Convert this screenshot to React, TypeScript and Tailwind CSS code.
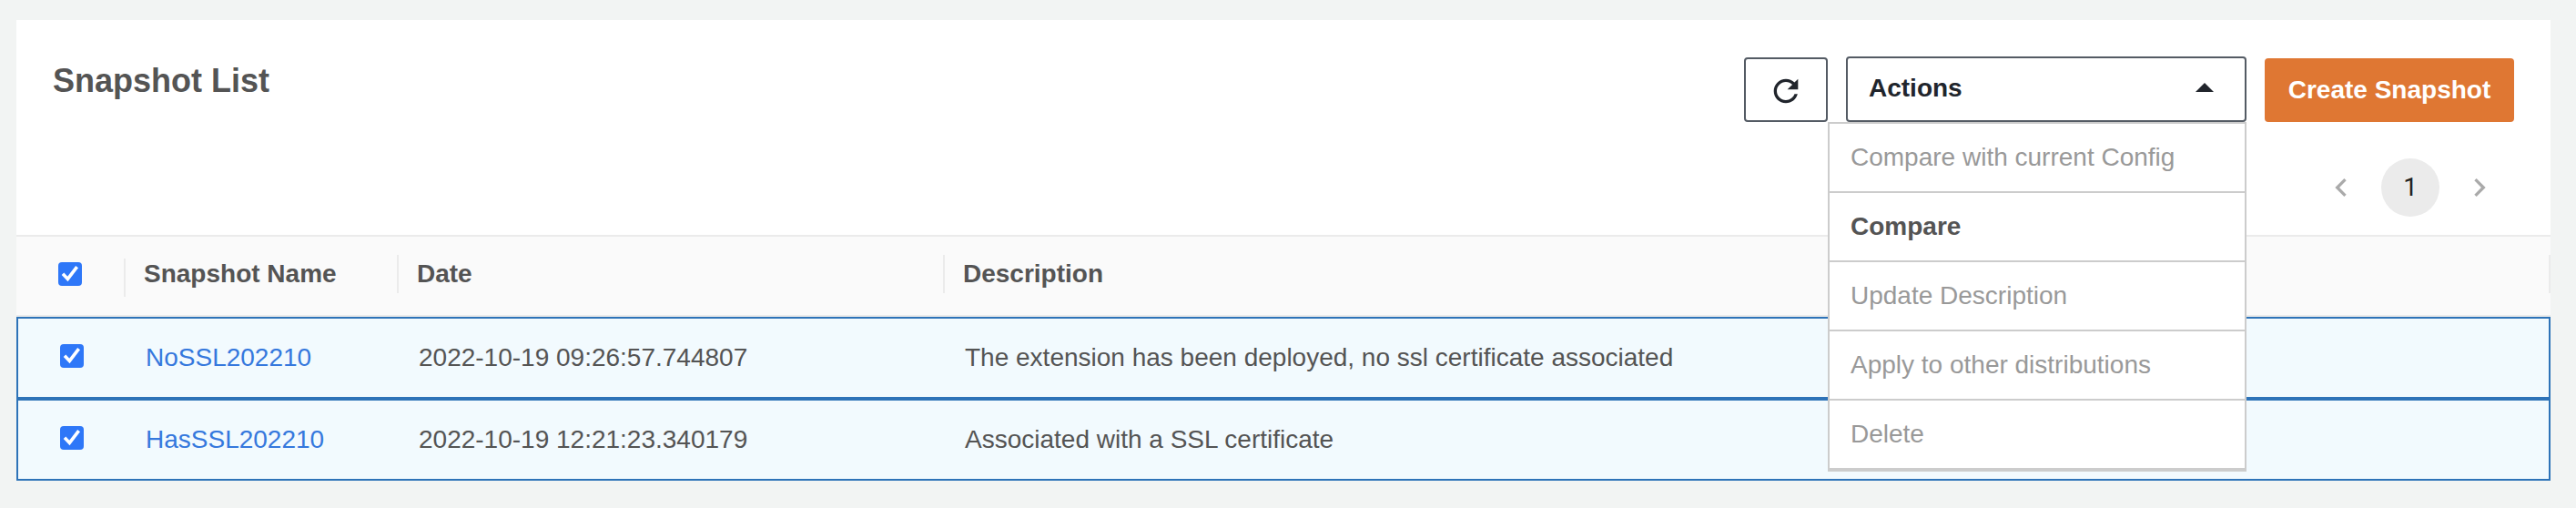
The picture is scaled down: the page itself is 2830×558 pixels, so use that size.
import React from "react";

function Check() {
  return (
    <span className="flex h-[26px] w-[26px] shrink-0 rounded-[4px] bg-[#2e77f8]">
      <svg width="26" height="26" viewBox="0 0 26 26" fill="none" stroke="#fff" strokeWidth="3.6">
        <path d="M5 12.8l5.4 5.6L20.6 5.2" />
      </svg>
    </span>
  );
}

const headers = [
  { label: "Snapshot Name", cell: "w-[300px]" },
  { label: "Date", cell: "w-[600px]" },
  { label: "Description", cell: "flex-1" },
];

const rows = [
  {
    name: "NoSSL202210",
    date: "2022-10-19 09:26:57.744807",
    description: "The extension has been deployed, no ssl certificate associated",
  },
  {
    name: "HasSSL202210",
    date: "2022-10-19 12:21:23.340179",
    description: "Associated with a SSL certificate",
  },
];

const actions = [
  { label: "Compare with current Config", enabled: false },
  { label: "Compare", enabled: true },
  { label: "Update Description", enabled: false },
  { label: "Apply to other distributions", enabled: false },
  { label: "Delete", enabled: false },
];

function ActionsMenu() {
  return (
    <div className="relative h-[72px] w-[440px]">
      <button className="flex h-full w-full items-center justify-between rounded-[4px] border-2 border-[#545b64] bg-white pr-[34px] pb-[2px] pl-[23px] font-bold text-[#21252c]">
        Actions
        <svg width="20" height="10" viewBox="0 0 20 10" className="-mt-[2px]">
          <path d="M0 10L10 0l10 10z" fill="#21252c" />
        </svg>
      </button>
      <ul className="absolute top-[72px] right-0 z-10 w-[460px] border-2 border-[#ccc] bg-white">
        {actions.map((a) => (
          <li
            key={a.label}
            className={
              a.enabled
                ? "flex h-[76px] items-center border-b-2 border-[#ccc] pl-[23px] font-bold text-[#545454]"
                : "flex h-[76px] items-center border-b-2 border-[#ccc] pl-[23px] text-[#999]"
            }
          >
            {a.label}
          </li>
        ))}
      </ul>
    </div>
  );
}

export default function App() {
  return (
    <div className="h-[558px] w-[2830px] overflow-hidden bg-[#f2f4f3] px-[18px] pt-[22px] pr-[28px] font-['Liberation_Sans',Arial,sans-serif] text-[28px] leading-[32px] text-[#545454]">
      <div className="bg-white">
        <div className="flex h-[236px] justify-between pt-[40px] pr-[40px] pl-[40px]">
          <h1 className="pt-[7px] text-[36px] leading-[40px] font-bold">Snapshot List</h1>
          <div className="flex flex-col items-end">
            <div className="flex items-end">
              <button className="mr-[20px] flex h-[71px] w-[92px] items-center justify-center rounded-[4px] border-2 border-[#545b64] bg-white pt-[2px]">
                <svg width="40" height="40" viewBox="0 0 24 24" fill="#21252c">
                  <path d="M17.65 6.35C16.2 4.9 14.21 4 12 4c-4.42 0-7.99 3.58-7.99 8s3.57 8 7.99 8c3.73 0 6.84-2.55 7.73-6h-2.08c-.82 2.33-3.04 4-5.65 4-3.31 0-6-2.69-6-6s2.69-6 6-6c1.66 0 3.14.69 4.22 1.78L13 11h7V4l-2.35 2.35z" />
                </svg>
              </button>
              <ActionsMenu />
              <button className="ml-[20px] h-[70px] w-[274px] rounded-[4px] bg-[#df7733] pb-px font-bold text-white">
                Create Snapshot
              </button>
            </div>
            <div className="mt-[40px] mr-[6px] flex h-[64px] items-center gap-[12px]">
              <span className="flex w-[64px] justify-center">
                <svg width="40" height="40" viewBox="0 0 24 24" fill="#aaa">
                  <path d="M15.41 7.41L14 6l-6 6 6 6 1.41-1.41L10.83 12z" />
                </svg>
              </span>
              <span className="flex h-[64px] w-[64px] items-center justify-center rounded-full bg-[#ebebeb] font-['Roboto',sans-serif] text-[#212121]">
                1
              </span>
              <span className="flex w-[64px] justify-center">
                <svg width="40" height="40" viewBox="0 0 24 24" fill="#aaa">
                  <path d="M10 6L8.59 7.41 13.17 12l-4.58 4.59L10 18l6-6z" />
                </svg>
              </span>
            </div>
          </div>
        </div>

        <div className="flex h-[90px] border-y-2 border-[#ebebeb] bg-[#fafafa]">
          <div className="flex w-[120px] justify-between pt-[24px]">
            <span className="pt-[4px] pl-[46px]">
              <Check />
            </span>
            <span className="h-[42px] w-[2px] bg-[#ebebeb]" />
          </div>
          {headers.map((h) => (
            <div key={h.label} className={`flex justify-between pt-[20px] pl-[20px] font-bold ${h.cell}`}>
              <span className="pt-[5px]">{h.label}</span>
              <span className="h-[42px] w-[2px] bg-[#ebebeb]" />
            </div>
          ))}
        </div>

        {rows.map((r) => (
          <div key={r.name} className="flex h-[90px] items-start border-2 border-[#2e73b8] bg-[#f2fafe] pt-[27px]">
            <div className="w-[120px] pt-px pl-[46px]">
              <Check />
            </div>
            <div className="w-[300px] pl-[20px] text-[#3578dd]">{r.name}</div>
            <div className="w-[600px] pl-[20px]">{r.date}</div>
            <div className="flex-1 pl-[20px]">{r.description}</div>
          </div>
        ))}
      </div>
    </div>
  );
}
